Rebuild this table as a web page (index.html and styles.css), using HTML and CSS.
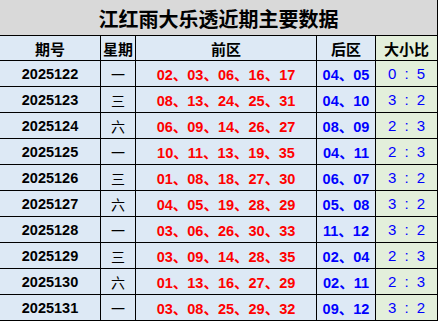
FILE: index.html
```html
<!DOCTYPE html>
<html lang="zh">
<head>
<meta charset="utf-8">
<link rel="stylesheet" href="styles.css">
</head>
<body>
<div class="sheet">
  <div class="cell title">江红雨大乐透近期主要数据</div>
  <div class="cell head">期号</div>
  <div class="cell head">星期</div>
  <div class="cell head">前区</div>
  <div class="cell head">后区</div>
  <div class="cell head green">大小比</div>

  <div class="cell num">2025122</div><div class="cell wk">一</div><div class="cell front">02、03、06、16、17</div><div class="cell back">04、05</div><div class="cell ratio green">0 : 5</div>
  <div class="cell num">2025123</div><div class="cell wk">三</div><div class="cell front">08、13、24、25、31</div><div class="cell back">04、10</div><div class="cell ratio green">3 : 2</div>
  <div class="cell num">2025124</div><div class="cell wk">六</div><div class="cell front">06、09、14、26、27</div><div class="cell back">08、09</div><div class="cell ratio green">2 : 3</div>
  <div class="cell num">2025125</div><div class="cell wk">一</div><div class="cell front">10、11、13、19、35</div><div class="cell back">04、11</div><div class="cell ratio green">2 : 3</div>
  <div class="cell num">2025126</div><div class="cell wk">三</div><div class="cell front">01、08、18、27、30</div><div class="cell back">06、07</div><div class="cell ratio green">3 : 2</div>
  <div class="cell num">2025127</div><div class="cell wk">六</div><div class="cell front">04、05、19、28、29</div><div class="cell back">05、08</div><div class="cell ratio green">3 : 2</div>
  <div class="cell num">2025128</div><div class="cell wk">一</div><div class="cell front">03、06、26、30、33</div><div class="cell back">11、12</div><div class="cell ratio green">3 : 2</div>
  <div class="cell num">2025129</div><div class="cell wk">三</div><div class="cell front">03、09、14、28、35</div><div class="cell back">02、04</div><div class="cell ratio green">2 : 3</div>
  <div class="cell num">2025130</div><div class="cell wk">六</div><div class="cell front">01、13、16、27、29</div><div class="cell back">02、11</div><div class="cell ratio green">2 : 3</div>
  <div class="cell num">2025131</div><div class="cell wk">一</div><div class="cell front">03、08、25、29、32</div><div class="cell back">09、12</div><div class="cell ratio green">3 : 2</div>
</div>
</body>
</html>
```

FILE: styles.css
```css
html, body {
  margin: 0;
  padding: 0;
  background: #ffffff;
}

.sheet {
  display: grid;
  grid-template-columns: 101px 35px 181px 59px 62px;
  grid-template-rows: 36px 25px repeat(10, 26px);
  width: 438px;
  font-family: "Liberation Sans", "Noto Sans CJK SC", sans-serif;
}

.cell {
  box-sizing: border-box;
  border-right: 1px solid #000;
  border-bottom: 1px solid #000;
  background: #dde9f5;
  display: flex;
  align-items: center;
  justify-content: center;
  font-size: 14.5px;
  color: #000;
  white-space: nowrap;
}

.title {
  grid-column: 1 / -1;
  background: #d9d9d9;
  font-family: "Noto Sans CJK SC", sans-serif;
  font-weight: bold;
  font-size: 20px;
  padding-top: 1px;
}

.head {
  font-family: "Noto Sans CJK SC", sans-serif;
  font-weight: bold;
  font-size: 15px;
}

.green {
  background: #e3efdb;
}

.num {
  font-weight: bold;
}

.wk {
  font-family: "Noto Sans CJK SC", sans-serif;
  font-size: 14px;
}

.front {
  color: #ff0000;
  font-weight: bold;
}

.back {
  color: #0000ff;
  font-weight: bold;
}

.ratio {
  color: #0000ff;
  font-size: 15px;
  word-spacing: 4px;
}
```
